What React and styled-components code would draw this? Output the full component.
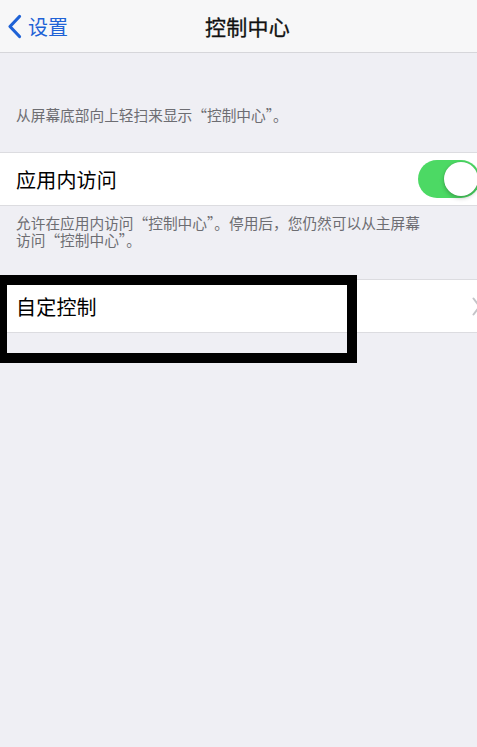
import React from "react";
import styled, { createGlobalStyle } from "styled-components";

const GlobalStyle = createGlobalStyle`
  html, body {
    margin: 0;
    padding: 0;
    background: #efeff4;
  }
  body {
    font-family: "Noto Sans CJK SC", "Noto Sans", sans-serif;
    color: #000;
  }
`;

const Page = styled.div`
  position: relative;
  width: 477px;
  height: 747px;
  overflow: hidden;
  background: #efeff4;
`;

const NavBar = styled.div`
  position: relative;
  height: 53px;
  background: #f7f7f8;
  border-bottom: 1px solid #d6d6da;
  display: flex;
  align-items: center;
  justify-content: center;
  padding-left: 18px;
  box-sizing: border-box;
`;

const BackButton = styled.div`
  position: absolute;
  left: 7px;
  top: 0;
  height: 53px;
  display: flex;
  align-items: center;
  gap: 6px;
  color: #1f62d6;
  font-size: 20px;
`;

const Title = styled.h1`
  margin: 0;
  font-size: 21px;
  font-weight: 400;
  letter-spacing: 0.3px;
  color: #111;
  -webkit-text-stroke: 0.3px #111;
`;

const SectionNote = styled.p`
  margin: 0;
  padding: ${(p) => p.$pad};
  font-size: 14.7px;
  line-height: 17px;
  color: #6d6d72;
`;

const Row = styled.div`
  height: 52px;
  background: #fff;
  border-top: 1px solid #dcdce0;
  border-bottom: 1px solid #dcdce0;
  display: flex;
  align-items: center;
  justify-content: space-between;
  padding-left: 16px;
  overflow: hidden;
`;

const RowLabel = styled.span`
  font-size: 20px;
  letter-spacing: 0.2px;
`;

const Toggle = styled.div`
  position: relative;
  width: 62px;
  height: 38px;
  margin-right: -3px;
  border-radius: 19px;
  background: #4cd964;
  flex-shrink: 0;
`;

const Knob = styled.div`
  position: absolute;
  right: 2px;
  top: 2px;
  width: 34px;
  height: 34px;
  border-radius: 50%;
  background: #fff;
  box-shadow: 0 2px 4px rgba(0, 0, 0, 0.25), 0 0 1px rgba(0, 0, 0, 0.2);
`;

const Chevron = styled.svg`
  width: 9px;
  height: 19px;
  margin-right: -4px;
  flex-shrink: 0;
`;

const Highlight = styled.div`
  position: absolute;
  left: -3px;
  top: 275px;
  width: 340px;
  height: 68px;
  border: 10px solid #000;
`;

export default function App() {
  return (
    <Page>
      <GlobalStyle />
      <NavBar>
        <BackButton>
          <svg width="15" height="25" viewBox="0 0 15 25">
            <path
              d="M12.5 2.5 L3 12.5 L12.5 22.5"
              fill="none"
              stroke="#1f62d6"
              strokeWidth="3.2"
              strokeLinecap="round"
              strokeLinejoin="round"
            />
          </svg>
          <span>设置</span>
        </BackButton>
        <Title>控制中心</Title>
      </NavBar>
      <SectionNote $pad="53px 16px 29px">从屏幕底部向上轻扫来显示“控制中心”。</SectionNote>
      <Row>
        <RowLabel>应用内访问</RowLabel>
        <Toggle>
          <Knob />
        </Toggle>
      </Row>
      <SectionNote $pad="8px 50px 31px 16px">
        允许在应用内访问“控制中心”。停用后，您仍然可以从主屏幕访问“控制中心”。
      </SectionNote>
      <Row>
        <RowLabel>自定控制</RowLabel>
        <Chevron viewBox="0 0 9 19">
          <path d="M1.5 1.5 L7.5 9.5 L1.5 17.5" fill="none" stroke="#c4c4c8" strokeWidth="2" strokeLinecap="round" strokeLinejoin="round" />
        </Chevron>
      </Row>
      <Highlight />
    </Page>
  );
}
